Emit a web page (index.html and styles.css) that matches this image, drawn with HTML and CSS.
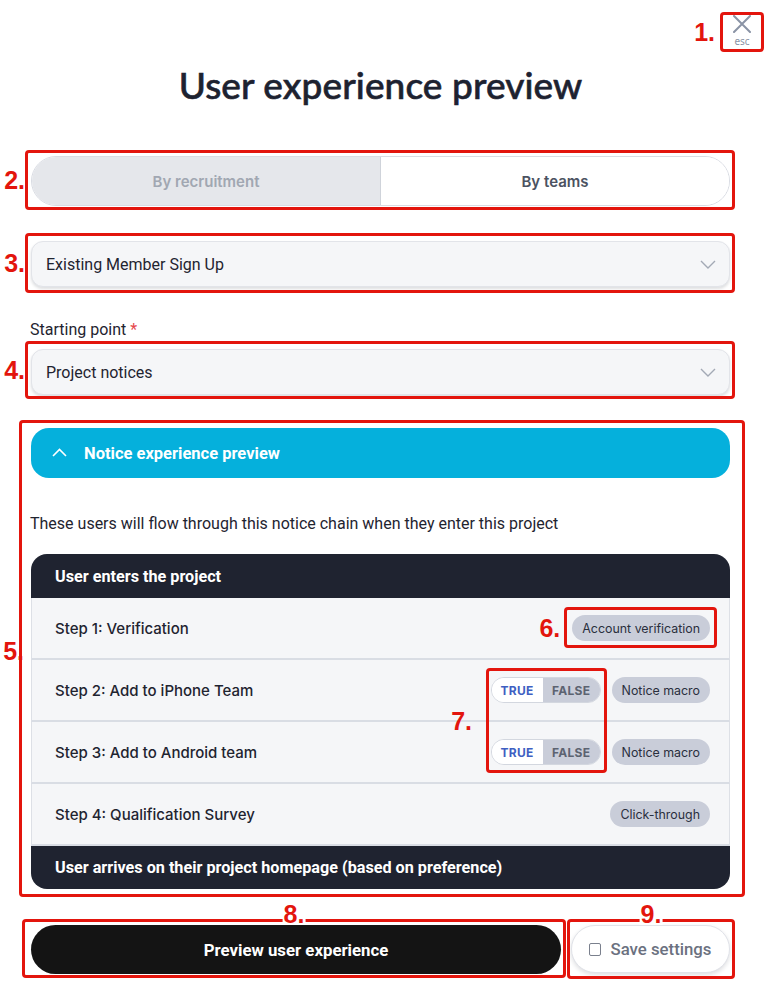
FILE: index.html
```html
<!DOCTYPE html>
<html lang="en">
<head>
<meta charset="utf-8">
<title>User experience preview</title>
<link rel="stylesheet" href="styles.css">
</head>
<body>
<div class="topbar">
  <div class="close-wrap">
    <button class="close" type="button">
      <svg class="close-x" width="18" height="18" viewBox="0 0 18 18"><path d="M1 1 L17 17 M17 1 L1 17" fill="none" stroke="#8a93a5" stroke-width="2" stroke-linecap="round"/></svg>
      <span class="esc">esc</span>
    </button>
    <div class="anno a1"><span class="anno-label side">1.</span></div>
  </div>
</div>

<main class="page">
  <h1 class="title">User experience preview</h1>

  <div class="annotated seg-wrap">
    <div class="segmented">
      <button class="seg seg-off" type="button">By recruitment</button>
      <button class="seg seg-on" type="button">By teams</button>
    </div>
    <div class="anno a2"><span class="anno-label side">2.</span></div>
  </div>

  <div class="annotated select-wrap first">
    <div class="select">
      <span class="select-text">Existing Member Sign Up</span>
      <svg class="chev" width="16" height="9" viewBox="0 0 16 9"><path d="M1 1 L8 8 L15 1" fill="none" stroke="#a3a9b5" stroke-width="1.4"/></svg>
    </div>
    <div class="anno a3"><span class="anno-label side">3.</span></div>
  </div>

  <label class="field-label">Starting point <span class="req">*</span></label>
  <div class="annotated select-wrap">
    <div class="select">
      <span class="select-text">Project notices</span>
      <svg class="chev" width="16" height="9" viewBox="0 0 16 9"><path d="M1 1 L8 8 L15 1" fill="none" stroke="#a3a9b5" stroke-width="1.4"/></svg>
    </div>
    <div class="anno a4"><span class="anno-label side">4.</span></div>
  </div>

  <section class="annotated preview">
    <div class="accordion-head">
      <svg class="chev-up" width="15" height="9" viewBox="0 0 15 9"><path d="M1 8 L7.5 1.5 L14 8" fill="none" stroke="#ffffff" stroke-width="1.6"/></svg>
      <span>Notice experience preview</span>
    </div>
    <p class="intro">These users will flow through this notice chain when they enter this project</p>

    <div class="chain">
      <div class="chain-head">User enters the project</div>
      <div class="step">
        <span class="step-name">Step 1: Verification</span>
        <div class="step-tags">
          <span class="annotated pill-wrap">
            <span class="pill">Account verification</span>
            <span class="anno a6"><span class="anno-label side">6.</span></span>
          </span>
        </div>
      </div>
      <div class="step">
        <span class="step-name">Step 2: Add to iPhone Team</span>
        <div class="step-tags">
          <span class="toggle"><span class="t-true">TRUE</span><span class="t-false">FALSE</span></span>
          <span class="pill">Notice macro</span>
        </div>
      </div>
      <div class="step">
        <span class="step-name">Step 3: Add to Android team</span>
        <div class="step-tags">
          <span class="toggle"><span class="t-true">TRUE</span><span class="t-false">FALSE</span></span>
          <span class="pill">Notice macro</span>
        </div>
      </div>
      <div class="step">
        <span class="step-name">Step 4: Qualification Survey</span>
        <div class="step-tags">
          <span class="pill">Click-through</span>
        </div>
      </div>
      <div class="chain-foot">User arrives on their project homepage (based on preference)</div>
      <div class="anno a7"><span class="anno-label side">7.</span></div>
    </div>
    <div class="anno a5"><span class="anno-label side l5">5.</span></div>
  </section>

  <div class="actions">
    <div class="annotated act-main">
      <button class="btn-primary" type="button">Preview user experience</button>
      <div class="anno a8"><span class="anno-label top">8.</span></div>
    </div>
    <div class="annotated act-save">
      <button class="btn-save" type="button"><span class="checkbox"></span>Save settings</button>
      <div class="anno a9"><span class="anno-label top">9.</span></div>
    </div>
  </div>
</main>
</body>
</html>
```

FILE: styles.css
```css
* { box-sizing: border-box; }

html, body {
  margin: 0;
  padding: 0;
  background: #ffffff;
}

body {
  font-family: Roboto, "Noto Sans", sans-serif;
  color: #1f2430;
  width: 776px;
}

button {
  font: inherit;
  margin: 0;
  cursor: pointer;
}

/* ---------- top bar ---------- */
.topbar {
  display: flex;
  justify-content: flex-end;
  padding: 12px 12px 0 0;
}

.close-wrap {
  position: relative;
  width: 44px;
  height: 40px;
}

.close {
  width: 44px;
  height: 40px;
  border: 0;
  background: transparent;
  padding: 3px 0 0;
  display: flex;
  flex-direction: column;
  align-items: center;
}

.close-x { display: block; }

.esc {
  font-family: "Noto Sans", sans-serif;
  font-size: 10px;
  line-height: 12px;
  color: #8a93a5;
  margin-top: 2px;
}

/* ---------- page ---------- */
.page {
  width: 699px;
  margin-left: 31px;
  padding-bottom: 16px;
}

.title {
  margin: 11px 0 0;
  text-align: center;
  font-family: Lato, "Noto Sans", sans-serif;
  font-weight: 500;
  font-size: 37px;
  line-height: 44px;
  color: #1d2230;
  letter-spacing: 0.1px;
  -webkit-text-stroke: 0.6px #1d2230;
}

.annotated { position: relative; }

/* ---------- segmented ---------- */
.seg-wrap { margin-top: 49px; }

.segmented {
  display: grid;
  grid-template-columns: 349px 1fr;
  height: 50px;
  border: 1px solid #d9dce3;
  border-radius: 25px;
  overflow: hidden;
}

.seg {
  border: 0;
  font-family: Inter, "Noto Sans", sans-serif;
  font-size: 15px;
  font-weight: 600;
}

.seg-off {
  background: #e5e7eb;
  color: #a1a7b2;
  border-right: 1px solid #cfd3da;
}

.seg-on {
  background: #ffffff;
  color: #4b5261;
}

/* ---------- selects ---------- */
.select-wrap.first { margin-top: 35px; }

.select {
  height: 46px;
  display: flex;
  align-items: center;
  justify-content: space-between;
  padding: 0 13px 0 14px;
  background: #f5f6f8;
  border: 1px solid #e2e4e9;
  border-radius: 12px;
  box-shadow: 0 2px 3px rgba(20, 25, 40, 0.14);
}

.select-text {
  font-size: 16px;
  color: #1f2430;
}

.field-label {
  display: block;
  margin: 33px 0 9px -1px;
  font-size: 16px;
  line-height: 20px;
  color: #1f2430;
}

.req { color: #e5484d; }

/* ---------- preview section ---------- */
.preview { margin-top: 33px; }

.accordion-head {
  height: 50px;
  display: flex;
  align-items: center;
  gap: 17px;
  padding-left: 21px;
  background: #05b0dc;
  border-radius: 18px;
  color: #ffffff;
  font-size: 16.5px;
  font-weight: 700;
}

.chev-up { margin-top: -2px; }

.intro {
  margin: 36px 0 20px -1px;
  font-size: 16px;
  line-height: 20px;
  color: #1f2430;
}

.chain {
  position: relative;
  border-radius: 16px;
}

.chain-head,
.chain-foot {
  background: #1f2330;
  color: #ffffff;
  font-size: 16.2px;
  font-weight: 700;
  padding-left: 24px;
  display: flex;
  align-items: center;
}

.chain-head {
  height: 44px;
  border-radius: 16px 16px 0 0;
}

.chain-foot {
  height: 43px;
  border-radius: 0 0 16px 16px;
}

.step {
  height: 62px;
  display: flex;
  align-items: center;
  justify-content: space-between;
  padding: 0 19px 0 23px;
  background: #f5f6f8;
  border-left: 1px solid #dde0e6;
  border-right: 1px solid #dde0e6;
  border-bottom: 2px solid #d9dde4;
}

.step:last-of-type { border-bottom: 1px solid #d9dde4; }

.step-name {
  font-family: Inter, "Noto Sans", sans-serif;
  font-weight: 500;
  font-size: 15px;
  color: #1f2430;
}

.step-tags {
  display: flex;
  align-items: center;
  gap: 11px;
}

.pill {
  display: inline-flex;
  align-items: center;
  height: 26px;
  padding: 0 10px;
  border-radius: 13px;
  background: #c9cdd9;
  font-family: Inter, "Noto Sans", sans-serif;
  font-size: 12.4px;
  color: #2a2f3d;
}

.pill-wrap { display: inline-flex; }

.toggle {
  display: inline-flex;
  height: 26px;
  border: 1px solid #d3d7df;
  border-radius: 13px;
  overflow: hidden;
  font-family: Inter, "Noto Sans", sans-serif;
  font-size: 12px;
  font-weight: 700;
  letter-spacing: 0.3px;
}

.t-true,
.t-false {
  display: flex;
  align-items: center;
  justify-content: center;
}

.t-true {
  width: 51px;
  background: #ffffff;
  color: #3e5fc2;
}

.t-false {
  width: 57px;
  background: #c9cdd9;
  color: #5c6371;
}

/* ---------- actions ---------- */
.actions {
  display: flex;
  gap: 10px;
  margin-top: 36px;
}

.act-main {
  width: 530px;
  display: flex;
}

.act-save {
  flex: 1;
  display: flex;
}

.btn-primary {
  width: 100%;
  height: 49px;
  border: 0;
  border-radius: 25px;
  background: #141414;
  color: #ffffff;
  font-size: 16.8px;
  font-weight: 700;
}

.btn-save {
  width: 100%;
  height: 48px;
  border: 1px solid #e1e3e9;
  border-radius: 24px;
  background: #ffffff;
  box-shadow: 0 2px 4px rgba(20, 25, 40, 0.14);
  color: #6b7180;
  font-size: 16.8px;
  font-weight: 500;
  display: flex;
  align-items: center;
  justify-content: center;
  gap: 9px;
}

.checkbox {
  width: 12px;
  height: 13px;
  border: 1.5px solid #7a808d;
  border-radius: 2px;
}

/* ---------- annotations ---------- */
.anno {
  position: absolute;
  border: 3px solid #e3150d;
  border-radius: 4px;
  pointer-events: none;
}

.anno-label {
  position: absolute;
  font-family: "Liberation Sans", Arial, sans-serif;
  font-weight: 700;
  font-size: 25px;
  line-height: 26px;
  color: #e3150d;
}

.anno-label.side {
  right: calc(100% + 6px);
  top: 50%;
  transform: translateY(-50%);
}

.anno-label.top {
  left: 50%;
  top: -19px;
  transform: translateX(-50%);
  background: #ffffff;
  padding: 0 1px;
  line-height: 22px;
}

.a1 { inset: 0; }
.a1 .anno-label.side { right: calc(100% + 8px); }

.a2 { inset: -6px -5px -4px -6px; }
.a2 .anno-label.side { right: calc(100% + 3px); }

.a3 { inset: -8px -5px -6px -6px; }
.a3 .anno-label.side { right: calc(100% + 3px); }

.a4 { inset: -8px -5px -4px -6px; }
.a4 .anno-label.side { right: calc(100% + 3px); }

.a5 { inset: -8px -15px -8px -12px; }
.a5 .anno-label.l5 {
  right: calc(100% - 2px);
  top: 215px;
  transform: none;
}

.a6 { inset: -8px -7px -7px -8px; }
.a6 .anno-label.side { right: calc(100% + 7px); }

.a7 {
  left: 455px;
  top: 114px;
  width: 121px;
  height: 105px;
}
.a7 .anno-label.side { right: calc(100% + 17px); }

.a8 { inset: -6px -5px -4px -9px; }
.a9 { inset: -6px -5px -5px -4px; }
```
